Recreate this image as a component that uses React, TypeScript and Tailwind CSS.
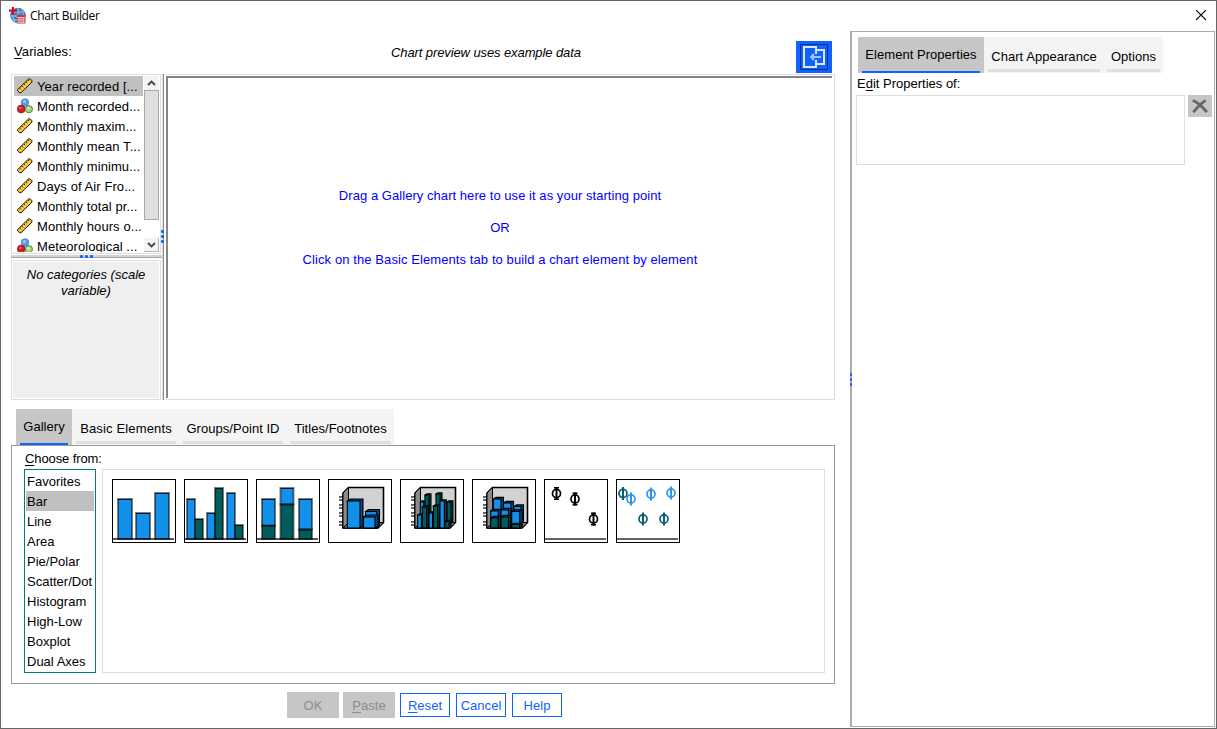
import React from "react";

const BLUE = "#1391ea";
const GREEN = "#005d5d";

const variables = [
  { name: "Year recorded [...", type: "scale" },
  { name: "Month recorded...", type: "nominal" },
  { name: "Monthly maxim...", type: "scale" },
  { name: "Monthly mean T...", type: "scale" },
  { name: "Monthly minimu...", type: "scale" },
  { name: "Days of Air Fro...", type: "scale" },
  { name: "Monthly total pr...", type: "scale" },
  { name: "Monthly hours o...", type: "scale" },
  { name: "Meteorological ...", type: "nominal" },
];

const chartTypes = ["Favorites", "Bar", "Line", "Area", "Pie/Polar", "Scatter/Dot", "Histogram", "High-Low", "Boxplot", "Dual Axes"];

function AppIcon() {
  return (
    <svg width="18" height="18" viewBox="0 0 18 18">
      <circle cx="9" cy="8.5" r="7.8" fill="#3f82bd" />
      <path d="M3 5h11M2 9h14M3 13h10M9 1v15M5 2c-2 5-2 9 1 13M13 2c2 4 2 9-1 13" stroke="#9cc4e2" strokeWidth="1" fill="none" />
      <path d="M3.9 0v8M0 3.6h8" stroke="#d40f2c" strokeWidth="2.2" />
      <rect x="8" y="8" width="8.5" height="8.5" fill="#c9354c" />
      <path d="M8 10.5h8M8 13h8M8 15.3h8M10 10v6M12.2 10v6M14.4 10v6" stroke="#fbe3e7" strokeWidth=".7" />
    </svg>
  );
}

function ScaleIcon() {
  return (
    <svg width="16" height="16" viewBox="0 0 16 16" className="mb-px shrink-0">
      <path d="M.6 11.6 11.6 .9h1.5L14.9 2.7v1.5L4 14.7H2.6L.6 12.8z" fill="#fbc21c" stroke="#111" strokeWidth="1" />
      <path d="M2.8 13.1 13.3 2.9" stroke="#fbd860" strokeWidth="1.2" />
      <path d="M2.8 10.2 4 11.4M4.9 8.1l1.2 1.2M7 6l1.2 1.2M9.1 4l1.2 1.2M11.1 2l1 1" stroke="#222" strokeWidth="1" />
    </svg>
  );
}

function NominalIcon() {
  return (
    <svg width="16" height="16" viewBox="0 0 16 16" className="shrink-0">
      <circle cx="8" cy="4.5" r="3.8" fill="#5a9be6" stroke="#3d7cc4" strokeWidth=".7" />
      <circle cx="4.2" cy="11" r="3.9" fill="#c9202c" stroke="#9d1420" strokeWidth=".7" />
      <circle cx="11.9" cy="11.2" r="3.6" fill="#a5d283" stroke="#4f8133" strokeWidth=".9" />
      <circle cx="7.5" cy="3.6" r="1.5" fill="#9cc8fa" />
      <circle cx="3.4" cy="9.9" r="1.2" fill="#e46a70" />
      <circle cx="11.4" cy="10.3" r="1.4" fill="#d0ebba" />
    </svg>
  );
}

function Chevron({ up = false }: { up?: boolean }) {
  return (
    <svg width="9" height="6" viewBox="0 0 9 6">
      <path d={up ? "M1 5 4.5 1.5 8 5" : "M1 1 4.5 4.5 8 1"} fill="none" stroke="#444" strokeWidth="1.8" />
    </svg>
  );
}

type BarSpec = [number, number, number, number, string];

function FlatBars({ bars }: { bars: BarSpec[] }) {
  return (
    <>
      {bars.map(([x, y, w, h, c], i) => (
        <g key={i}>
          <rect x={x} y={y} width={w} height={h} fill={c} stroke="#000" strokeOpacity=".5" strokeWidth="2" />
          <path d={`M${x} ${y + 0.5}h${w}`} stroke="#000" strokeOpacity=".7" />
        </g>
      ))}
      <path d="M1 60h61" stroke="#000" strokeOpacity=".65" strokeWidth="2" />
    </>
  );
}

function Room() {
  return (
    <>
      <path d="M11 18h4M11 21h4M11 26h4M11 29h4M11 34h4M11 37h4M11 43h4M11 46h4" stroke="#333" strokeWidth="1.3" />
      <path d="M20.5 8.5h35v35L50 49H15V14z" fill="#d2d2d2" stroke="#000" strokeWidth="1.6" />
      <path d="M15 14 20.5 8.5v35L15 49z" fill="#8b8b8b" stroke="#000" strokeWidth="1" />
      <path d="M15 49l5.5-5.5h35L50 49z" fill="#777" stroke="#000" strokeWidth="1" />
    </>
  );
}

function Block({ x, y, w, b = 49, c, d = 3, dark }: { x: number; y: number; w: number; b?: number; c: string; d?: number; dark: string }) {
  return (
    <g stroke="#000" strokeWidth="1.1">
      <path d={`M${x} ${y}l${d} ${-d * 0.65}h${w}v${b - y}l${-d} ${d * 0.65}z`} fill={dark} />
      <rect x={x} y={y} width={w} height={b - y} fill={c} />
    </g>
  );
}

function Phi({ x, y, c, caps = false }: { x: number; y: number; c: string; caps?: boolean }) {
  return (
    <g stroke={c} fill="none">
      <ellipse cx={x} cy={y} rx="4" ry="4.1" strokeWidth="1.7" />
      <path d={`M${x} ${y - 6.5}v13`} strokeWidth="2" />
      {caps && <path d={`M${x - 2.5} ${y - 5.7}h5M${x - 2.5} ${y + 5.7}h5`} strokeWidth="1.5" />}
    </g>
  );
}

const DB = "#0a4679";
const DG = "#00403f";

const thumbs = [
  <FlatBars bars={[[6, 20, 14, 40, BLUE], [24, 34, 14, 26, BLUE], [43, 14, 14, 46, BLUE]]} />,
  <FlatBars bars={[[3, 20, 8, 40, BLUE], [11, 40, 8, 20, GREEN], [23, 34, 8, 26, BLUE], [31, 9, 8, 51, GREEN], [43, 14, 8, 46, BLUE], [51, 46, 8, 14, GREEN]]} />,
  <FlatBars bars={[[6, 20, 13, 27, BLUE], [6, 46.5, 13, 13.5, GREEN], [24.5, 9, 13, 16.5, BLUE], [24.5, 25.4, 13, 34.6, GREEN], [43, 20, 13, 30.5, BLUE], [43, 50.5, 13, 9.5, GREEN]]} />,
  <>
    <Room />
    <Block x={37.5} y={32.5} w={11} c={BLUE} dark={DB} />
    <Block x={19.3} y={22} w={12.7} c={BLUE} dark={DB} />
    <Block x={35.5} y={38} w={11.5} c={BLUE} dark={DB} />
  </>,
  <>
    <Room />
    <Block x={20.3} y={23} w={3.5} c={BLUE} dark={DB} d={2} />
    <Block x={25} y={16} w={4} c={GREEN} dark={DG} d={2} />
    <Block x={36} y={15} w={4} c={GREEN} dark={DG} d={2} />
    <Block x={47} y={23} w={4} b={44} c={GREEN} dark={DG} d={2} />
    <Block x={17.7} y={36} w={3.7} c={BLUE} dark={DB} d={2} />
    <Block x={22.3} y={28} w={4.3} c={GREEN} dark={DG} d={2} />
    <Block x={29} y={34} w={3.5} c={BLUE} dark={DB} d={2} />
    <Block x={33.3} y={27} w={4.3} c={GREEN} dark={DG} d={2} />
    <Block x={40} y={22} w={4.3} c={BLUE} dark={DB} d={2} />
    <Block x={45} y={42.5} w={4} c={GREEN} dark={DG} d={2} />
  </>,
  <>
    <Room />
    <Block x={21.5} y={20} w={7.5} c={BLUE} dark={DB} d={2.5} />
    <Block x={31.5} y={24} w={7.5} c={BLUE} dark={DB} d={2.5} />
    <Block x={42} y={27.5} w={7} b={44} c={BLUE} dark={DB} d={2.5} />
    <Block x={18.7} y={32} w={7.5} c={BLUE} dark={DB} d={2.5} />
    <Block x={18.7} y={39} w={7.5} c={GREEN} dark={DG} d={2.5} />
    <Block x={29} y={31} w={7.5} c={BLUE} dark={DB} d={2.5} />
    <Block x={29} y={38} w={7.5} c={GREEN} dark={DG} d={2.5} />
    <Block x={39.7} y={32.5} w={8} c={BLUE} dark={DB} d={2.5} />
    <Block x={39.7} y={45.5} w={8} c={GREEN} dark={DG} d={2} />
  </>,
  <>
    <Phi x={12.5} y={14.5} c="#000" caps />
    <Phi x={31} y={20} c="#000" caps />
    <Phi x={49.5} y={40} c="#000" caps />
    <path d="M1 60h61" stroke="#636363" strokeWidth="2" />
  </>,
  <>
    <Phi x={15} y={20} c="#2e95eb" />
    <Phi x={7} y={14.5} c="#075e70" />
    <Phi x={35} y={15} c="#2e95eb" />
    <Phi x={55} y={14} c="#2e95eb" />
    <Phi x={27} y={40} c="#075e70" />
    <Phi x={48} y={40} c="#075e70" />
    <path d="M1 60h61" stroke="#636363" strokeWidth="2" />
  </>,
];

function Dots({ vertical = false }: { vertical?: boolean }) {
  return (
    <div className={vertical ? "flex flex-col gap-[2px]" : "flex gap-[2px]"}>
      {[0, 1, 2].map((i) => (
        <span key={i} className="block h-[3px] w-[3px] rounded-[1px] bg-[#0f62fe]" />
      ))}
    </div>
  );
}

function ActiveTab({ label, className }: { label: string; className: string }) {
  return (
    <div className={`flex h-9 flex-col items-center bg-[#c6c6c6] px-1 ${className}`}>
      <span className="h-[34px] whitespace-nowrap leading-[35px]">{label}</span>
      <span className="h-[2px] w-full bg-[#0f62fe]" />
    </div>
  );
}

function Tab({ label, className }: { label: string; className: string }) {
  return (
    <div className={`flex h-9 flex-col items-center ${className}`}>
      <span className="h-8 whitespace-nowrap leading-[39px]">{label}</span>
      <span className="h-[3px] w-full bg-[#e0e0e0]" />
    </div>
  );
}

function VariablePane() {
  return (
    <div className="flex w-[151px] flex-col">
      <div className="flex h-[180px] w-[150px] border border-[#dedede] pl-[2px] pt-px">
        <div className="h-[176px] w-[129px] overflow-hidden">
          {variables.map((v, i) => (
            <div key={v.name} className={`flex h-5 items-center gap-1 pl-[3px] ${i === 0 ? "bg-[#c0c0c0]" : ""}`}>
              {v.type === "scale" ? <ScaleIcon /> : <NominalIcon />}
              <span className="whitespace-nowrap pt-[2px] leading-5 tracking-[0.08px]">{v.name}</span>
            </div>
          ))}
        </div>
        <div className="ml-px flex h-[176px] w-[15px] flex-col items-center bg-white">
          <div className="flex h-[14px] w-full items-center justify-center bg-[#f3f3f3]"><Chevron up /></div>
          <div className="h-[130px] w-full border border-[#a8a8a8] bg-[#dfdfdf]" />
          <div className="mt-auto flex h-[14px] w-full items-center justify-center border-b border-r border-[#b5b5b5] bg-[#f3f3f3]"><Chevron /></div>
        </div>
      </div>
      <div className="flex h-[6px] items-start justify-center pt-px">
        <div className="flex h-[3px] w-full justify-center border-b border-[#a4a4a4] bg-[#d2d2d2]"><Dots /></div>
      </div>
      <div className="h-[140px] w-[150px] border border-[#dedede] p-px">
        <div className="h-full bg-[#efefef] px-2 pt-[5px] text-center italic leading-4 tracking-[0px]">No categories (scale variable)</div>
      </div>
    </div>
  );
}

function Preview() {
  return (
    <div className="h-[326px] w-[669px] border-b border-r border-t border-[#dedede] pr-[2px] pt-px">
      <div className="flex h-[322px] flex-col items-center border-l-2 border-t-2 border-[#858585] pt-[108px] leading-5 text-[#0000ff]">
        <div className="h-8 tracking-[0.05px]">Drag a Gallery chart here to use it as your starting point</div>
        <div className="h-8">OR</div>
        <div className="h-8 tracking-[0.09px]">Click on the Basic Elements tab to build a chart element by element</div>
      </div>
    </div>
  );
}

function Gallery() {
  return (
    <div className="ml-[10px] w-[824px]">
      <div className="ml-[5px] flex h-9 w-[378px] bg-[#f4f4f4]">
        <ActiveTab label="Gallery" className="w-14" />
        <Tab label="Basic Elements" className="ml-1 w-[100px] tracking-[0.15px]" />
        <Tab label="Groups/Point ID" className="ml-[7px] w-[100px]" />
        <Tab label="Titles/Footnotes" className="ml-[7px] w-[101px]" />
      </div>
      <div className="h-[239px] border border-[#999] pl-3 pt-[3px]">
        <div className="h-5 pl-px leading-5 tracking-[-0.1px]"><u className="underline-offset-2">C</u>hoose from:</div>
        <div className="flex gap-[6px]">
          <div className="h-[204px] w-[72px] border border-[#007d79] p-px tracking-[0px]">
            {chartTypes.map((t) => (
              <div key={t} className={`h-5 whitespace-nowrap pl-px leading-[21px] ${t === "Bar" ? "bg-[#c0c0c0]" : ""}`}>{t}</div>
            ))}
          </div>
          <div className="flex h-[204px] w-[723px] gap-2 border border-[#dedede] pl-[9px] pt-[9px]">
            {thumbs.map((art, i) => (
              <div key={i} className="h-16 w-16 border border-black bg-white">
                <svg width="62" height="62" viewBox="1 1 62 62">{art}</svg>
              </div>
            ))}
          </div>
        </div>
      </div>
    </div>
  );
}

function Buttons() {
  const outlined = "h-6 w-[50px] border border-[#0f62fe] text-center leading-[23px] text-[#0f62fe]";
  return (
    <div className="ml-[286px] mt-2 flex h-[26px] items-center">
      <button className="h-[26px] w-[52px] bg-[#c6c6c6] pt-px text-[#8d8d8d]">OK</button>
      <button className="ml-1 h-[26px] w-[52px] bg-[#c6c6c6] pt-px text-[#8d8d8d]"><u className="underline-offset-2">P</u>aste</button>
      <button className={`ml-[5px] ${outlined}`}><u className="underline-offset-2">R</u>eset</button>
      <button className={`ml-[6px] ${outlined}`}>Cancel</button>
      <button className={`ml-[6px] ${outlined}`}>Help</button>
    </div>
  );
}

function PropertiesPanel() {
  return (
    <div className="relative h-[696px] w-[365px] border border-l-2 border-[#acacac] pl-[4px] pt-[5px]">
      <div className="absolute -left-[2px] top-[341px] w-[2px] overflow-hidden"><Dots vertical /></div>
      <div className="ml-[2px] flex h-9 w-[305px] bg-[#f4f4f4]">
        <ActiveTab label="Element Properties" className="w-[126px]" />
        <Tab label="Chart Appearance" className="ml-1 w-28" />
        <Tab label="Options" className="ml-[7px] w-[53px]" />
      </div>
      <div className="h-[22px] pl-px leading-[21px] tracking-[0px]">E<u className="underline-offset-2">d</u>it Properties of:</div>
      <div className="flex gap-[3px]">
        <div className="h-[70px] w-[329px] border border-[#dedede]" />
        <button className="flex h-[22px] w-6 items-center justify-center bg-[#c6c6c6]">
          <svg width="16" height="14" viewBox="0 0 16 14"><path d="M2 2C7 4 10 8 14 12M12.5 2.2C9 4.5 5.5 8 2.2 12.2" stroke="#666" strokeWidth="2.8" fill="none" strokeLinecap="square" /></svg>
        </button>
      </div>
    </div>
  );
}

export default function App() {
  return (
    <div className="flex h-[729px] w-[1217px] flex-col overflow-hidden border border-[#666] bg-white text-[13px] tracking-[0.04px] text-black [font-family:'Liberation_Sans',Arial,sans-serif]">
      <div className="flex h-[30px] items-center pl-2 pr-[9px]">
        <AppIcon />
        <span className="ml-[3px] text-[12px] tracking-[-0.35px] [font-family:'Open_Sans','Noto_Sans',sans-serif]">Chart Builder</span>
        <svg className="ml-auto" width="12" height="12" viewBox="0 0 12 12"><path d="m1 0 10 10M11 0 1 10" stroke="#111" strokeWidth="1.1" /></svg>
      </div>
      <div className="flex h-[697px]">
        <div className="flex w-[849px] flex-col">
          <div className="flex h-[43px] pl-[13px]">
            <span className="w-[377px] pt-[11px] leading-5 tracking-[0.1px]"><u className="underline-offset-2">V</u>ariables:</span>
            <span className="pt-3 italic leading-5 tracking-[-0.1px]">Chart preview uses example data</span>
            <button className="ml-auto mr-[18px] mt-[10px] flex h-8 w-9 items-center justify-center bg-[#0f62fe]">
              <svg width="28" height="26" viewBox="0 0 28 26" fill="none">
                <rect x=".5" y=".5" width="27" height="25" stroke="#000" strokeDasharray="1 1" />
                <path d="M16 7V3H4v20h12v-4M16 7v3M16 16v3M16 6h8v14h-8" stroke="#d8e5ff" strokeWidth="2" />
                <path d="M11 13h10M14 10l-3 3 3 3" stroke="#a6c8ff" strokeWidth="1.8" />
              </svg>
            </button>
          </div>
          <div className="flex h-[335px] pl-[10px]">
            <VariablePane />
            <div className="flex h-[326px] w-[4px] items-center">
              <div className="relative h-full w-[2px] border-r border-[#8d8d8d] bg-[#d8d8d8]">
                <div className="absolute -left-px top-[156px]"><Dots vertical /></div>
              </div>
            </div>
            <Preview />
          </div>
          <Gallery />
          <Buttons />
        </div>
        <PropertiesPanel />
      </div>
    </div>
  );
}
